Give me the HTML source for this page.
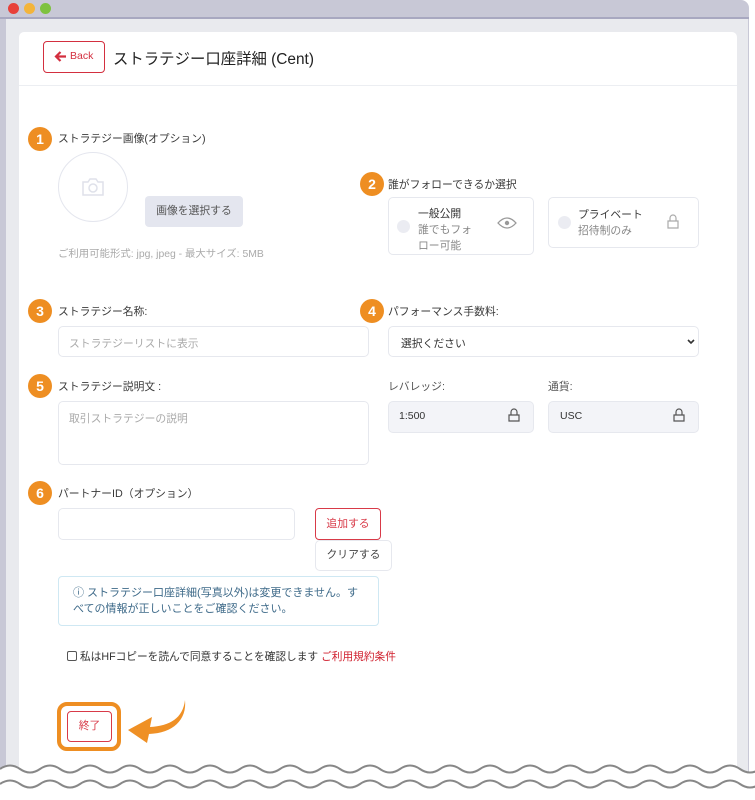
<!DOCTYPE html>
<html><head><meta charset="utf-8"><style>
*{box-sizing:border-box;margin:0;padding:0}
body{width:755px;height:800px;position:relative;overflow:hidden;background:#fff;font-family:"Liberation Sans","Noto Sans CJK JP",sans-serif;color:#333}
.a{position:absolute}
.frame{left:0;top:0;width:749px;height:790px;background:#c8c8d6;border-radius:0 8px 0 0}
.bar{left:0;top:17px;width:749px;height:2px;background:#a8a8c0}
.inner{left:6px;top:19px;width:742px;height:780px;background:#e9eaee}
.card{left:19px;top:32px;width:718px;height:760px;background:#fff;border-radius:5px}
.hline{left:19px;top:85px;width:718px;height:1px;background:#eceef2}
.dot{width:11px;height:11px;border-radius:50%;top:3px}
.badge{width:24px;height:24px;border-radius:50%;background:#ee8e22;color:#fff;font-weight:bold;font-size:14px;text-align:center;line-height:24px}
.lbl{font-size:10.8px;color:#3a3a3a;line-height:14px;white-space:nowrap}
.box{border:1px solid #e6e8ee;border-radius:5px;background:#fff}
.gray{background:#f3f4f8}
.ph{font-size:10.8px;color:#aaa}
</style></head><body>
<div class="a frame"></div><div class="a bar"></div>
<div class="a dot" style="left:8px;background:#e8403a"></div>
<div class="a dot" style="left:24px;background:#f3b43b"></div>
<div class="a dot" style="left:40px;background:#7ec23f"></div>
<div class="a inner"></div>
<div class="a card"></div>
<div class="a hline"></div>

<div class="a" style="left:43px;top:41px;width:62px;height:32px;border:1px solid #d32f3f;border-radius:4px"></div>
<svg class="a" style="left:54px;top:50px" width="13" height="13" viewBox="0 0 13 13"><path d="M12 6.5H2M6.5 2L2 6.5 6.5 11" fill="none" stroke="#d32f3f" stroke-width="2.2"/></svg>
<div class="a" style="left:70px;top:50px;font-size:10.5px;color:#d32f3f">Back</div>
<div class="a" style="left:113px;top:47px;font-size:15.4px;color:#222;white-space:nowrap">ストラテジー口座詳細 (Cent)</div>

<div class="a badge" style="left:28px;top:127px">1</div>
<div class="a lbl" style="left:58px;top:132px">ストラテジー画像(オプション)</div>
<div class="a" style="left:58px;top:152px;width:70px;height:70px;border:1.5px solid #e4e6ee;border-radius:50%"></div>
<svg class="a" style="left:81px;top:178px" width="24" height="18" viewBox="0 0 24 18"><path d="M2 4h5l2-3h6l2 3h5v13H2z" fill="none" stroke="#dfe1ea" stroke-width="1.5"/><circle cx="12" cy="10" r="4" fill="none" stroke="#dfe1ea" stroke-width="1.5"/></svg>
<div class="a" style="left:145px;top:196px;width:98px;height:31px;background:#e4e6ef;border-radius:4px;font-size:10.8px;color:#555;text-align:center;line-height:31px">画像を選択する</div>
<div class="a" style="left:58px;top:245px;font-size:10.4px;color:#aaa;white-space:nowrap">ご利用可能形式: jpg, jpeg - 最大サイズ: 5MB</div>

<div class="a badge" style="left:360px;top:172px">2</div>
<div class="a lbl" style="left:388px;top:178px">誰がフォローできるか選択</div>
<div class="a box" style="left:388px;top:197px;width:146px;height:58px"></div>
<div class="a" style="left:397px;top:220px;width:13px;height:13px;border-radius:50%;background:#ebecf2"></div>
<div class="a lbl" style="left:418px;top:206px;line-height:16px;color:#333">一般公開<br><span style="color:#888">誰でもフォ<br>ロー可能</span></div>
<svg class="a" style="left:497px;top:216px" width="20" height="14" viewBox="0 0 20 14"><path d="M1 7Q10-3 19 7Q10 17 1 7z" fill="none" stroke="#999" stroke-width="1.3"/><circle cx="10" cy="7" r="2.2" fill="#999"/></svg>
<div class="a box" style="left:548px;top:197px;width:151px;height:51px"></div>
<div class="a" style="left:558px;top:216px;width:13px;height:13px;border-radius:50%;background:#ebecf2"></div>
<div class="a lbl" style="left:578px;top:207px;line-height:16px">プライベート<br><span style="color:#888">招待制のみ</span></div>
<svg class="a" style="left:667px;top:214px" width="12" height="15" viewBox="0 0 12 15"><path d="M3 7V4a3 3 0 0 1 6 0v3M1 7h10v7H1z" fill="none" stroke="#aaa" stroke-width="1.2"/></svg>

<div class="a badge" style="left:28px;top:299px">3</div>
<div class="a lbl" style="left:58px;top:305px">ストラテジー名称:</div>
<div class="a box" style="left:58px;top:326px;width:311px;height:31px"></div>
<div class="a ph" style="left:69px;top:335px">ストラテジーリストに表示</div>

<div class="a badge" style="left:360px;top:299px">4</div>
<div class="a lbl" style="left:388px;top:305px">パフォーマンス手数料:</div>
<div class="a box" style="left:388px;top:326px;width:311px;height:31px"></div>
<div class="a" style="left:401px;top:335px;font-size:10.8px;color:#333">選択ください</div>
<svg class="a" style="left:687px;top:339px" width="8" height="6" viewBox="0 0 8 6"><path d="M1 1l3 3 3-3" fill="none" stroke="#333" stroke-width="1.6"/></svg>

<div class="a badge" style="left:28px;top:374px">5</div>
<div class="a lbl" style="left:58px;top:380px">ストラテジー説明文 :</div>
<div class="a box" style="left:58px;top:401px;width:311px;height:64px"></div>
<div class="a ph" style="left:69px;top:410px">取引ストラテジーの説明</div>

<div class="a lbl" style="left:388px;top:380px;color:#555">レバレッジ:</div>
<div class="a box gray" style="left:388px;top:401px;width:146px;height:32px"></div>
<div class="a" style="left:399px;top:410px;font-size:10.5px;color:#333">1:500</div>
<svg class="a" style="left:508px;top:408px" width="12" height="15" viewBox="0 0 12 15"><path d="M3 7V4a3 3 0 0 1 6 0v3M1 7h10v6H1z" fill="none" stroke="#555" stroke-width="1.2"/></svg>
<div class="a lbl" style="left:548px;top:380px;color:#555">通貨:</div>
<div class="a box gray" style="left:548px;top:401px;width:151px;height:32px"></div>
<div class="a" style="left:560px;top:410px;font-size:10.5px;color:#333">USC</div>
<svg class="a" style="left:673px;top:408px" width="12" height="15" viewBox="0 0 12 15"><path d="M3 7V4a3 3 0 0 1 6 0v3M1 7h10v6H1z" fill="none" stroke="#555" stroke-width="1.2"/></svg>

<div class="a badge" style="left:28px;top:481px">6</div>
<div class="a lbl" style="left:58px;top:487px">パートナーID（オプション）</div>
<div class="a box" style="left:58px;top:508px;width:237px;height:32px"></div>
<div class="a" style="left:315px;top:508px;width:66px;height:32px;border:1px solid #d83a48;border-radius:4px;color:#d83a48;font-size:10.8px;text-align:center;line-height:30px">追加する</div>
<div class="a box" style="left:315px;top:540px;width:77px;height:31px;font-size:10.8px;text-align:center;line-height:29px;color:#444">クリアする</div>
<div class="a" style="left:58px;top:576px;width:321px;height:50px;border:1px solid #cfe8f3;border-radius:4px;padding:8px 14px 0 14px;font-size:11px;line-height:16px;color:#3e6a89">ⓘ ストラテジー口座詳細(写真以外)は変更できません。す<br>べての情報が正しいことをご確認ください。</div>

<div class="a" style="left:67px;top:649px;font-size:10.7px;color:#333;white-space:nowrap"><span style="display:inline-block;width:10px;height:10px;border:1px solid #555;border-radius:2px;vertical-align:-1px"></span> 私はHFコピーを読んで同意することを確認します <span style="color:#d0202e">ご利用規約条件</span></div>

<div class="a" style="left:57px;top:702px;width:64px;height:49px;border:4px solid #ee8e22;border-radius:10px"></div>
<div class="a" style="left:67px;top:711px;width:45px;height:31px;border:1px solid #d83a48;border-radius:4px;color:#d83a48;font-size:10.8px;text-align:center;line-height:29px">終了</div>
<svg class="a" style="left:125px;top:698px" width="65" height="48" viewBox="0 0 65 48"><path d="M60 2C58 20 45 28 25 29L27 19 3 32 22 45 24 36C48 35 62 22 60 2z" fill="#ef9025"/></svg>

<svg class="a" style="left:0;top:755px" width="755" height="45" viewBox="0 0 755 45">
<path d="M0 14 q10 -7 20 0 t20 0 t20 0 t20 0 t20 0 t20 0 t20 0 t20 0 t20 0 t20 0 t20 0 t20 0 t20 0 t20 0 t20 0 t20 0 t20 0 t20 0 t20 0 t20 0 t20 0 t20 0 t20 0 t20 0 t20 0 t20 0 t20 0 t20 0 t20 0 t20 0 t20 0 t20 0 t20 0 t20 0 t20 0 t20 0 t20 0 t20 0 V45 H0z" fill="#fff"/>
<path d="M0 14 q10 -7 20 0 t20 0 t20 0 t20 0 t20 0 t20 0 t20 0 t20 0 t20 0 t20 0 t20 0 t20 0 t20 0 t20 0 t20 0 t20 0 t20 0 t20 0 t20 0 t20 0 t20 0 t20 0 t20 0 t20 0 t20 0 t20 0 t20 0 t20 0 t20 0 t20 0 t20 0 t20 0 t20 0 t20 0 t20 0 t20 0 t20 0 t20 0" fill="none" stroke="#888" stroke-width="2"/>
<path d="M0 29 q10 -7 20 0 t20 0 t20 0 t20 0 t20 0 t20 0 t20 0 t20 0 t20 0 t20 0 t20 0 t20 0 t20 0 t20 0 t20 0 t20 0 t20 0 t20 0 t20 0 t20 0 t20 0 t20 0 t20 0 t20 0 t20 0 t20 0 t20 0 t20 0 t20 0 t20 0 t20 0 t20 0 t20 0 t20 0 t20 0 t20 0 t20 0 t20 0" fill="none" stroke="#888" stroke-width="2"/>
</svg>
</body></html>
